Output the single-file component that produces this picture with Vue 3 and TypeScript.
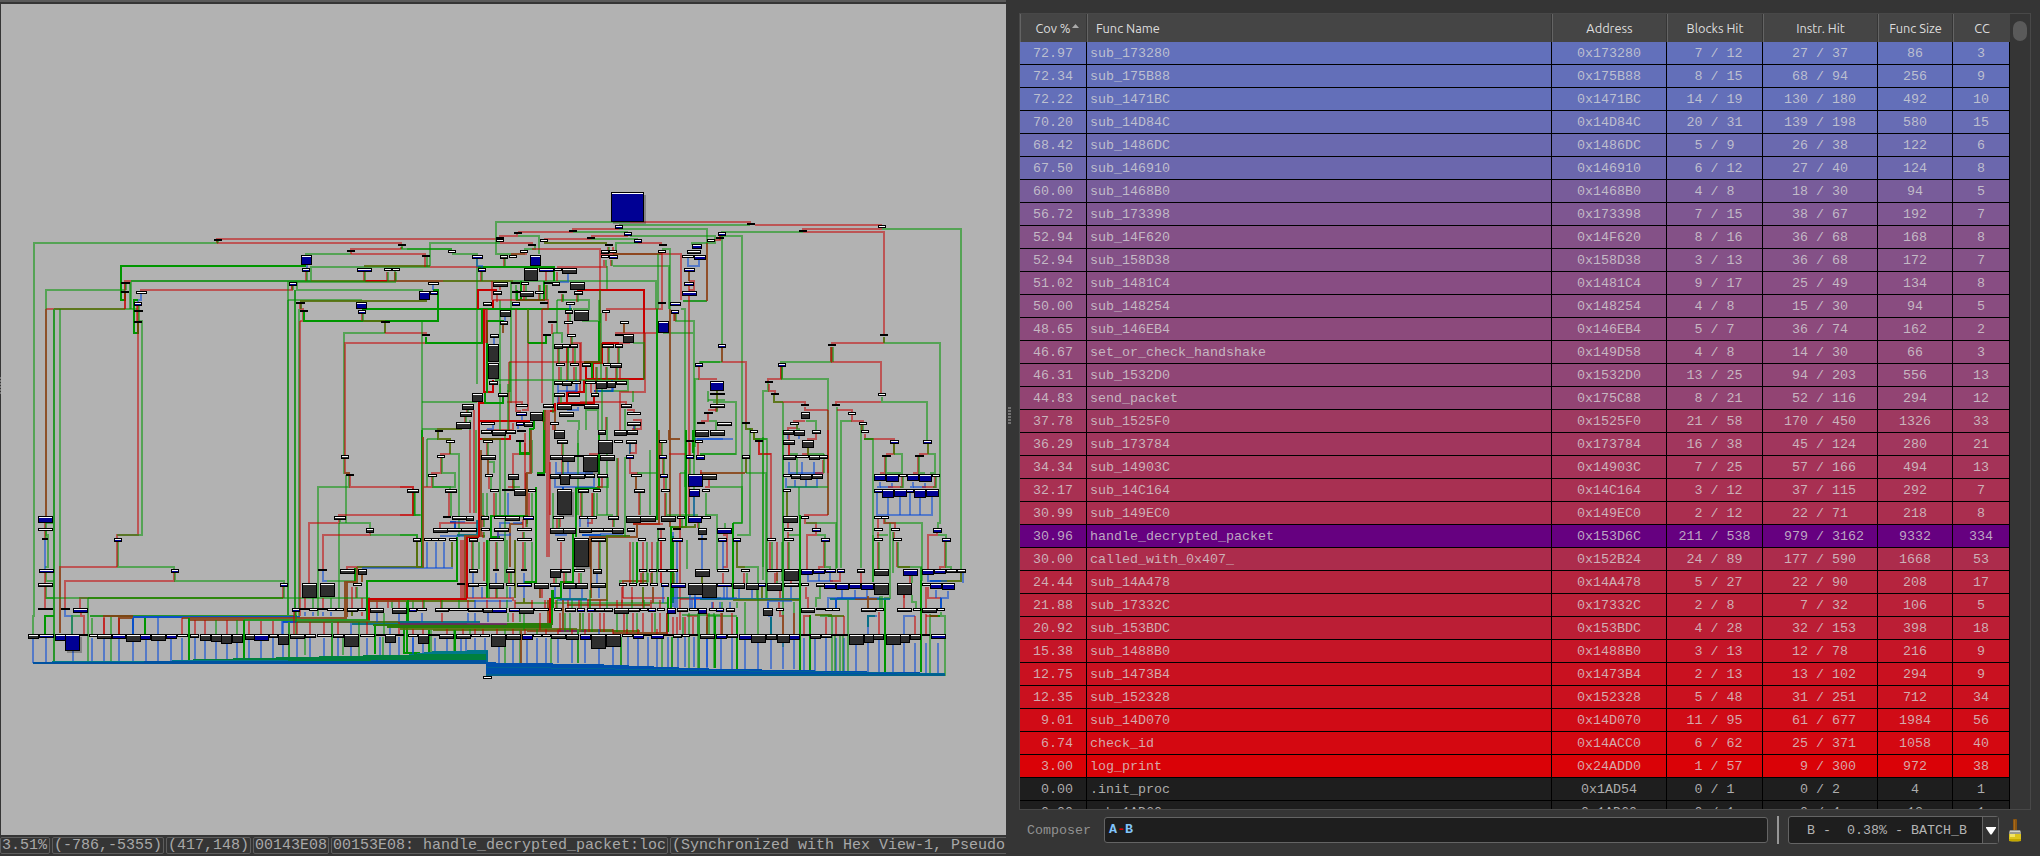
<script setup lang="ts">
type Row = [number, string, string, number, number, number, number, number, number]

const functions: Row[] = [
  [72.97, 'sub_173280', '0x173280', 7, 12, 27, 37, 86, 3],
  [72.34, 'sub_175B88', '0x175B88', 8, 15, 68, 94, 256, 9],
  [72.22, 'sub_1471BC', '0x1471BC', 14, 19, 130, 180, 492, 10],
  [70.2, 'sub_14D84C', '0x14D84C', 20, 31, 139, 198, 580, 15],
  [68.42, 'sub_1486DC', '0x1486DC', 5, 9, 26, 38, 122, 6],
  [67.5, 'sub_146910', '0x146910', 6, 12, 27, 40, 124, 8],
  [60, 'sub_1468B0', '0x1468B0', 4, 8, 18, 30, 94, 5],
  [56.72, 'sub_173398', '0x173398', 7, 15, 38, 67, 192, 7],
  [52.94, 'sub_14F620', '0x14F620', 8, 16, 36, 68, 168, 8],
  [52.94, 'sub_158D38', '0x158D38', 3, 13, 36, 68, 172, 7],
  [51.02, 'sub_1481C4', '0x1481C4', 9, 17, 25, 49, 134, 8],
  [50, 'sub_148254', '0x148254', 4, 8, 15, 30, 94, 5],
  [48.65, 'sub_146EB4', '0x146EB4', 5, 7, 36, 74, 162, 2],
  [46.67, 'set_or_check_handshake', '0x149D58', 4, 8, 14, 30, 66, 3],
  [46.31, 'sub_1532D0', '0x1532D0', 13, 25, 94, 203, 556, 13],
  [44.83, 'send_packet', '0x175C88', 8, 21, 52, 116, 294, 12],
  [37.78, 'sub_1525F0', '0x1525F0', 21, 58, 170, 450, 1326, 33],
  [36.29, 'sub_173784', '0x173784', 16, 38, 45, 124, 280, 21],
  [34.34, 'sub_14903C', '0x14903C', 7, 25, 57, 166, 494, 13],
  [32.17, 'sub_14C164', '0x14C164', 3, 12, 37, 115, 292, 7],
  [30.99, 'sub_149EC0', '0x149EC0', 2, 12, 22, 71, 218, 8],
  [30.96, 'handle_decrypted_packet', '0x153D6C', 211, 538, 979, 3162, 9332, 334],
  [30, 'called_with_0x407_', '0x152B24', 24, 89, 177, 590, 1668, 53],
  [24.44, 'sub_14A478', '0x14A478', 5, 27, 22, 90, 208, 17],
  [21.88, 'sub_17332C', '0x17332C', 2, 8, 7, 32, 106, 5],
  [20.92, 'sub_153BDC', '0x153BDC', 4, 28, 32, 153, 398, 18],
  [15.38, 'sub_1488B0', '0x1488B0', 3, 13, 12, 78, 216, 9],
  [12.75, 'sub_1473B4', '0x1473B4', 2, 13, 13, 102, 294, 9],
  [12.35, 'sub_152328', '0x152328', 5, 48, 31, 251, 712, 34],
  [9.01, 'sub_14D070', '0x14D070', 11, 95, 61, 677, 1984, 56],
  [6.74, 'check_id', '0x14ACC0', 6, 62, 25, 371, 1058, 40],
  [3, 'log_print', '0x24ADD0', 1, 57, 9, 300, 972, 38],
  [0, '.init_proc', '0x1AD54', 0, 1, 0, 2, 4, 1],
  [0, 'sub_1AD60', '0x1AD60', 0, 1, 0, 4, 12, 1],
]

const selected = 'handle_decrypted_packet'

function rowColor(r: Row): string {
  if (r[1] === selected) return '#660080'
  if (r[0] === 0) return '#1e1e1e'
  const t = (r[0] - 3) / 69.97
  const mix = (a: number, b: number) => Math.round(a + (b - a) * t)
  return `rgb(${mix(218, 98)},${mix(2, 112)},${mix(7, 187)})`
}

const ratio = (a: number, b: number, n: number) =>
  String(a).padStart(n) + ' / ' + String(b).padEnd(n)

/* Call graph. Every section has its own origin and counts in thirds of a pixel.
   blocks: "y kind+x,width,height ..." with b = covered, k = uncovered, n = collapsed
   wires:  "kind path"
   runs:   "y1 y2 kind+x ..." vertical wires, p = a true/false pair */
interface Section { x: number; y: number; blocks: string[]; wires: string[]; runs: string[] }

const sections: Section[] = [
  {
    x: 0, y: 180,
    blocks: [
      '177 n642,24', '192 n1194,24', '210 n1041,24', '225 b903,33,30',
      '264 b906,24,12 b1071,45,12 k1152,24 k1176,24', '306 n362,28 b867,24,12',
      '333 n363,24 k408,33', '366 b402,24,12 n888,27 b1068,33,21',
      '390 n402,27 n900,24 b1074,24,12', '423 n402,24 n1143,27',
    ],
    wires: [
      'g M99 1365V1308H102V189H652V180', 'r M650 180V177H1500', 'r M652 189H1203V195', 'r M1052 210V207H1203',
      'g M1206 195V207H1355', 'g M917 225V222H1052', 'r M1052 222H1278', 'G M919 257H363V360H375V336',
      'g M933 303V260H1290', 'o M1092 259H1290', 'd M392 303H933', 'o M933 303H1095', 'R M1095 303H1162',
      'n M1162 303H1330', 'o M1330 303H1540', 'g M870 306H1184V270', 'g M392 306V386', 'g M389 306V386', 'o M163 386H375',
      'g M375 386H410', 'r M138 386H163', 'n M138 386V1008', 'd M163 386V1445', 'g M180 386V1360',
      'r M352 1160H180V1360', 'r M375 386V303H392', 'g M138 386V330H375', 'r M422 335V330H876V316',
      'b M422 340V360H414V368', 'G M414 360H402V459H414V428', 'r M414 378V1065H352V1075',
      'g M417 423H426V1065H352', 'd M864 360V1308', 'g M864 303V360', 'g M891 306V330H1270', 'd M885 330V1308',
      'g M864 360H1086', 'o M900 362H1280', 'g M897 386V1308', 'r M900 423V1308', 'r M903 370V387H909V423H900',
      'G M912 395V423H1314V330H1300', 'G M1086 387H1450', 'o M1088 423H1155', 'o M1155 428V459',
      'g M1155 459H1032V825', 'r M1155 459H1278V465', 'r M1035 825V489H1445',
    ],
    runs: ['275 303 p920 p1094 p1162 p1186', '312 330 p377', '342 386 r375', '315 330 p878', '378 423 p414', '370 387 p902', '402 423 p1088', '180 189 p653', '200 207 p1205', '212 222 r1052', '255 264 b922'],
  },
  {
    x: 400, y: 180,
    blocks: [
      '36 b633,99,90', '135 b645,24,12', '150 n507,24', '156 n342,24 b672,24,12', '171 n561,24 n288,24',
      '177 k288,24 k420,24 b702,24,12 k921,24', '192 n384,24 n615,24 n777,24 b876,30,15',
      '210 k144,24 k360,24 k603,24,12 k627,24 k774,24 k861,42,12',
      '225 n66,24 b216,33,12 k300,24,12 k327,24 b390,33,33 k603,24 b627,27,12 k846,36 b882,36,15',
      '264 b234,24,12 k372,42,39 b417,45,12 k462,24 k486,45,18 b852,33,12',
      '306 k84,33 k279,45,15 n333,27 k363,24 n432,24 k456,24,12 k510,45,24 b852,30,12',
      '333 b57,33,27 b90,24,12 k279,27,12 n336,24 k360,42,18 k405,27 n474,27 k522,27,12 b846,45,15',
      '366 k249,27,12 b336,24,12 n420,24 k498,27 n774,24 b810,33,12',
      '390 k300,33,21 k495,24,12 k522,45,33 k606,24 b813,24,12',
      '423 k300,24,12 n444,27 k492,27 k660,27 b774,33,36',
      '462 n66,24 k270,27,12 n429,24 k501,27 n645,24 k669,33,27',
      '492 k264,33,54 k462,27,15 k486,24,12 k510,24,12 k606,36,12 k645,24,12',
      '549 k264,33,48 k468,27 k510,27 k546,27,12 k609,27 k630,36,15 b885,24,12',
      '603 k267,27,12 k462,27,12 k486,30,15 k516,27 k555,33 k588,33,24 k621,27,21 k648,33,12 b930,42,30',
      '639 k216,33,27 k294,30,12 k462,33,12 k504,36,12 k573,24,12 n930,45',
      '672 k186,36,18 k348,36 k429,33,12 k471,45,18 n516,36 k552,45,15 k663,33,12 k930,45,12',
      '696 k180,36,15 b348,33,12 k390,39,27 k477,45,15 k681,42 n912,27',
      '726 k168,45,21 k243,42 b348,24,12 k372,27,15 k450,27 k681,42,12 n891,24 k951,45,12',
      '750 n105,24 k243,33,12 k276,42,18 k318,30,12 n351,27 k462,33,27 k594,24,15 k642,39,18 k681,33,15 k885,42,21 k930,45,18',
    ],
    wires: [
      'r M690 126H1050V131', 'g M690 126H288V222H372V212', 'g M656 134H1050', 'r M656 147H518V150', 'g M656 147H921V362',
      'r M518 156H354', 'g M520 156H684', 'r M350 160V168H300V172', 'g M354 168H417V222', 'r M684 168H572',
      'g M690 168H945V189H876V195', 'g M572 177H714', 'r M572 177H432', 'o M432 189H620', 'r M714 189H787', 'g M648 222V189H714',
      'r M300 189H396V195', 'g M90 258V189H300', 'g M155 207H20', 'g M155 222H231V612', 'g M372 207H405V195',
      'r M396 207H600V550', 'r M336 225V222H380', 'r M600 222H843V360', 'n M640 222H787', 'g M787 207H809V387',
      'G M234 261H462V303', 'r M90 261H234', 'r M470 261H620', 'g M640 258H807V387', 'g M620 258V330', 'b M231 235V258H245V265',
      'g M340 303H768V387', 'R M292 330H234V387', 'R M530 330H732V460', 'n M732 460V597', 'R M732 597H560',
      'R M552 600V636H500V670', 'R M583 640V669H470', 'R M465 670V693H435', 'R M606 490V549H579V600', 'R M558 555V600',
      'R M255 387H279V360', 'R M252 490V636H279V600', 'R M238 1065V670H255V640', 'R M390 723H238V777H330V765',
      'R M606 489H656', 'G M246 387V489H78V470', 'G M250 387H515', 'G M262 640V423H312', 'G M308 645V669H256V640',
      'G M348 360H432V303', 'G M362 303V360', 'o M384 387V489', 'G M384 489H438V465', 'G M598 423V546H552',
      'G M576 549V595', 'g M546 423H598V360', 'g M300 360V640', 'g M333 303V669', 'r M276 303V360', 'r M348 387V693H360V698',
      'r M384 489V690H365', 'r M427 387V670', 'r M279 360H445V387H427', 'r M327 546V750', 'r M327 546H600', 'g M285 600H685V633H600',
      'g M600 330V430', 'g M472 360V460', 'g M472 360H567V387H520', 'g M460 459V700', 'g M460 459H486V489', 'r M540 489V640',
      'r M512 489H542V600', 'r M620 390V387H785V370', 'd M850 362H921', 'r M922 190V362', 'g M843 387H855V1000',
      'g M825 423H882V1010', 'g M790 459H880', 'r M867 345V1010', 'r M736 459V636H660V750', 'r M645 459H774',
      'g M700 489H732V600', 'g M65 423V750', 'g M65 666H230', 'g M897 546H960', 'r M897 560V597H950', 'g M885 800V597H897',
      'b M863 235V258H896V240', 'r M867 303H882V330H867', 'b M505 275V305H482V310', 'b M475 632H530V612', 'b M583 632H640V620',
      'B M583 633H605', 't M605 633H640', 'b M500 690H534V680', 'r M320 666H366V672', 'g M320 633H330V546', 'g M66 747H110', 'o M110 747H187',
      'r M540 666H678V675', 'r M680 690H703V696', 'r M700 720H722V747H695', 'g M678 690H676V750', 'g M560 690H595V750',
      'g M500 723H537V750', 'n M465 693V750', 'G M402 747V720', 'G M402 747H390V820H360V780', 'g M925 660H975', 'g M925 633V666',
      'r M903 723H925V700', 'g M928 723H948V750', 'r M925 690H950V684', 'b M890 776H1000', 'r M258 750H340V730', 'b M262 747H278V735',
      'G M350 360V330', 'r M655 492V489H690', 'g M700 633V666', 'r M215 663H240', 'r M222 690V750', 'g M210 720V750', 'g M490 360V345',
    ],
    runs: [
      '237 258 p313', '230 260 p78', '275 303 r438 r470 p245', '315 330 r300 b100', '315 360 g348 p375 p418 p440', '342 366 r292 p487 p532',
      '375 390 b510', '402 423 p507 p825', '432 462 r505 r457', '470 492 p514', '505 549 p475 p502 p522', '505 600 p502',
      '505 549 p625 p656', '560 600 p480 p525 p620 p650 r660', '240 258 p635 p615', '200 222 p625 r638', '220 366 r785',
      '275 303 n867', '315 333 r867', '402 423 n825', '400 423 r617', '432 460 n672', '412 425 b315', '435 460 n310', '472 492 b282',
      '600 636 b528 b635 b500', '645 670 b475 p480', '700 720 b365', '735 747 b355', '690 700 p203', '710 726 p197', '387 1020 G772',
      '222 387 g774', '387 1040 n811', '387 490 R252 r258 r262', '400 600 g603', '560 640 p590', '612 640 b475 r573', '620 750 g605',
      '690 1130 x443', '690 880 G433 n436', '612 750 g300 g325', '735 750 r460 p703', '735 746 b703', '710 726 p430', '600 750 g558', '710 750 p620', '780 880 p393',
    ],
  },
  {
    x: 700, y: 180,
    blocks: [
      '129 n141,24', '135 k534,24', '150 n297,24', '156 b54,24,12', '171 n48,24', '462 n540,24', '492 b54,24,12 n384,24',
      '549 b234,24,12', '603 n195,24', '639 n213,24 k534,24', '672 n303,24 n396,24', '696 k303,27,21 k444,24',
      '726 n126,24 k270,27 k477,24', '750 k150,24 k249,33,15 k282,33,18 k336,27,12 k483,24',
    ],
    wires: [
      'r M165 135H546', 'g M546 147H783V1170', 'r M546 147H308V150', 'r M308 156H552V465', 'g M308 156H66V492',
      'r M60 168V180H30', 'g M60 168H126V1028H98', 'r M396 492V489H552', 'g M552 489H720V1028H714V1045', 'g M394 500V546H243V549', 'r M396 500V546H543V640',
      'r M66 546H138V727', 'n M66 503V546', 'g M0 546H66', 'r M243 560V597H204V604', 'g M246 560V597H384V690', 'n M384 690V1005',
      'g M205 610V633H189V1200', 'r M206 612V633H225V640', 'g M249 666V1400', 'o M223 645V666H249', 'r M249 666H315V674', 'r M314 680V690H384',
      'r M384 1005H315V1010', 'g M546 650V666H681V780', 'r M543 666H408V674', 'g M411 680V1165', 'r M410 690H456V697',
      'g M456 723H423V1165', 'r M456 705V723H489V728', 'r M495 762V777H582V782', 'o M493 777H520', 'r M315 723H283V727',
      'g M317 723H348V750', 'g M40 666H108V822H0', 'r M263 750V745H290V735', 'g M290 735V747H300', 'o M138 733V747H160', 'o M162 760V777H180', 'g M180 777H202', 'g M483 1165V735',
      'g M150 745V1065H111', 'r M348 760V777H323V790',
    ],
    runs: ['470 489 o552', '168 180 r60', '500 546 p396', '560 597 p244', '735 750 p488', '765 777 b265 b297', '633 672 o50', '684 697 p50'],
  },
  {
    x: 0, y: 430,
    blocks: [
      '75 k1023,24,12', '132 n1038,24', '177 k1221,36,12', '258 b114,45,21 k1002,36,12', '294 k114,45 k1098,24,15',
      '324 n126,18 b342,24,12 k1239,24,12', '417 b117,45,12 b513,24,12 n954,27 k1020,45,15 k1074,27,18',
      '459 k114,45,12 b840,24,12 k906,45,45 k960,45,42 k1059,27',
      '534 n114,45 n183,27 b219,45,15 b876,24,12 n897,30 k927,27 n951,30 k981,27 k1008,24 k1041,33,12 k1074,24 k1110,42,15 k1176,45,18 b1227,24,12',
      '612 k84,33,15 b117,45,12 b165,33,21 b195,45,51 n237,27 k267,27 k291,45,15 b336,42,15 k378,45,24 b420,33,18 k453,45,21 b498,33,15 k531,33 k570,27,12 k600,33,21 k633,33,24 k663,33,30 k696,33,27 k735,30,18 b762,45,21 k807,27,12 k834,33,33 k870,45,15 k915,33,12 k951,45 k999,33,12 k1032,45,39 k1080,45 n1128,27 k1155,33,27 n1185,27 k1224,30',
    ],
    wires: [
      'g M1033 85V128H1050', 'r M1036 85V128H1050', 'g M1038 135V279', 'g M1047 138V171H954V558', 'r M1050 138V171H1239V180',
      'r M1239 188V255H1017V260', 'g M1242 188V255H1260', 'r M1017 268V279H927V460', 'g M1020 268V279H1110V295', 'g M1017 279V535',
      'r M1110 308V315H969V417', 'g M1110 315H1251V325', 'b M969 422V453H981', 'g M981 453H1065', 'G M1065 414V453', 'o M1251 335V410',
      'o M1070 410H1270', 'b M1085 414H1358', 'r M1040 420V410H1070', 'n M1070 410V455H1035V562', 'n M1040 455V560',
      'o M264 504H850', 'r M240 535V504H264', 'g M138 504H1110', 'g M355 335V410H521V418', 'r M352 335V410',
      'r M522 428V453H195V535', 'g M525 428V453H852V460', 'g M264 504V695', 'g M138 279H158', 'g M138 300V315H144V410H135', 'g M138 428V453H160',
      'g M138 470V504H160', 'G M136 612V558H162', 'b M195 540V558H216V612', 'r M243 548V558H252V612', 'g M216 612V558H240',
      'd M270 558H890', 'r M312 612V558H400', 'B M400 562H900', 'n M357 612V563H400', 'n M546 565H1040', 'n M568 569H1100', 'd M732 571H1110',
      'B M848 575H1260', 'R M1107 570V507H1200', 'n M1110 512H1200', 'G M1100 570V453H1372V320', 'o M891 577H1222', 't M1055 581H1400',
      'G M1222 588H1260', 'G M1222 575V512', 'r M849 470V504', 'g M852 470V504', 'G M1125 588V672', 'G M1213 588V668H1260', 'G M1220 588V668', 'b M1170 612V584H1400',
      'b M846 612V573', 'b M850 612V573', 'b M1053 612V580',
    ],
    runs: [
      '280 325 r135 g138', '330 417 b135', '428 460 r135', '470 535 r135', '435 455 n1086', '470 504 p1070', '470 535 r1056', '504 535 r1085', '504 535 r915 g938 r969 g993',
      '510 535 r1131 r1164 r1197 g1176 g1239', '545 612 p885', '545 558 b915 b940 b969 b993 o1056 r1086',
      '565 612 g276 g435 G435 b399 B399 b474 r312 r357 r546', '570 612 r585 r615 g648 r681 g711',
      '573 612 r747 r783 r819', '577 612 r891 r930 r972 r1014 r1101 g1152 r1197', '560 695 g333 d162',
      '565 690 G567', '571 688 G732', '577 685 d868 d996 g1077',
      '625 698 b99 b138 b219 b276 b312 b357 b399 b438 b474 b513 b546 b585 b615', '625 688 b648 b681 b711 b747 b783 b819 b850 b891 b930 b972 b1014 b1053 b1101',
      '622 675 b1140 b1170 b1197 b1239 g915 g1030 g1148', '550 575 b1131 b1197 g1152',
    ],
  },
  {
    x: 400, y: 430,
    blocks: [
      '30 k138,27 k249,30 n348,24 k471,33,12 k594,45,42 k642,27 k678,33,12 k777,24 n858,24 k885,24',
      '75 k111,24 k243,45,15 k450,39,15 k486,39,21 n525,24 k549,45,51 k600,45,18 b678,24,12 b777,24,12 b858,24,12 b888,27,15',
      '132 k84,27 k255,24 k324,33,18 n411,24 k450,30,15 k510,45,15 k480,30,33 k555,30,12 k591,33,12 k693,33 b780,24,12 b864,45,39 k906,45,18',
      '177 k21,36,12 k135,36,12 k270,27 n306,36 k342,36,21 k384,24 k471,45,78 k534,33,12 k579,24 k702,33,12 k783,27 b867,33,24 k906,24',
      '258 n129,24 k156,45,12 k198,24,15 k243,24,12 k282,36 k315,45,15 b369,33,12 k459,33 k537,30 k561,30 k624,33,12 k678,45,21 k720,48,18 k783,45,18 k831,24 b864,42,21 k906,27',
      '294 k99,45,15 k141,45,12 k183,48,12 k243,27 k282,45,12 k351,45 k450,42,18 k489,39,18 k537,39,15 k573,42,12 k609,33,12 k636,36,18 k681,24,12 n771,24 n819,24 k894,27,21',
      '324 k39,24,12 k72,24 k93,24 k114,24 k147,24 k207,27,12 k267,45 k351,45 k471,24 k522,45,87 k573,45,12 k714,24 k774,24 b816,33,12 n894,27',
      '417 k207,27,12 n279,18 k318,27,12 n363,18 k450,33,27 k483,30,12 k522,33 k579,27,15 k717,24 k747,24 k774,27 k801,33 k885,45,24',
      '459 n171,24 k204,33,12 k234,27 k267,45,18 k318,27 b351,45,12 k402,45,18 k450,30,12 k489,39,18 k528,36,18 k573,45,15 k657,24 k687,24 k717,27 k750,24 b783,24,12 b813,45,15 k864,45,36 k906,45,45',
      '534 k51,30 k105,42,12 k147,57 k204,45,12 k249,30,15 b276,45,15 b327,33,12 k357,45,18 k402,45 k462,24 k495,33,12 b531,24,12 b561,24,12 k585,30,12 k612,27,12 k642,45,18 k684,36,12 k720,24 b744,24,12 k771,24 b801,27,18 k831,33,12 k867,27 b894,27,18',
      '612 n0,12 k24,30 k54,33,30 n87,30 k117,45,15 k168,45,15 k213,30 k240,30 k273,45,39 k318,45,18 b366,33,18 k399,27 k426,27 k453,45,15 k498,39,18 b540,33,18 k573,45,45 k618,45,39 k666,33 b699,33,15 n732,24 b753,39,15 n792,27 k819,27,12 k846,24 n870,24',
      '738 k249,27',
    ],
    wires: [
      'o M115 5V27H150V32', 'g M81 27H115', 'g M81 27V170', 'o M150 40V72', 'r M150 72H123V77', 'g M150 72H177V320', 'r M123 85V129H97V133',
      'g M126 85V129H165V171H100', 'r M95 141V171H70', 'g M100 141V171H150V178', 'r M0 171H38V178', 'r M38 188V255H0', 'g M41 188V255H66',
      'g M0 315H50V325', 'o M50 335V410H72', 'o M157 335V410', 'b M131 335V414', 'b M108 335V414', 'b M81 335V414', 'b M160 276H195', 'B M150 276H165V294', 'r M120 294V279H240',
      'b M120 318H192', 't M170 315H230V270', 'R M200 505V320H238', 'n M196 505V318H255', 'g M245 27H300V258', 'g M265 95H282V130', 'r M340 132V72H376',
      'g M340 150V171H360', 'b M324 190V258', 'r M324 171H345', 'n M392 0V128H380V282', 'n M377 128V255', 'n M365 275V282H330V410', 'G M433 0V128H410', 'G M408 170V455H372',
      'G M598 0V175H528V320', 'G M520 312V455H482V505H455', 'G M455 505V585', 'G M360 40V72H390', 'b M468 95V129H575V135', 'b M505 95V129', 'r M570 75V72H594',
      'b M465 145V171H530', 'B M490 178V171', 'b M583 145V171H530', 'g M625 140V171H592', 'r M592 171H607V145', 'o M690 40V72', 'b M690 40V72', 'r M690 40H708V70H690',
      'r M690 85V129H710V135', 'g M710 129H772', 'n M708 140V178', 'g M720 188V255', 'r M716 188V255', 'r M575 190V279H560', 'g M590 190V255H640',
      'G M772 0V255', 'n M776 0V282H700', 'n M808 0V27H840', 'g M798 190V255H895', 'r M795 188V258', 'r M807 72H860', 'r M840 130V600', 'g M840 129H860',
      'G M857 0V290H812V530', 'o M885 282V290H820', 'g M883 0V80', 'G M880 0V70', 'g M900 72H1007', 'n M900 129H1036', 'b M885 27H970', 'b M882 200V258', 'g M918 190V255',
      'r M700 282H790', 'R M238 0V320', 'n M242 60V315', 'G M272 255V320H300', 'b M300 294V279H330', 'b M340 279H365', 'G M275 258H385',
      'b M465 315H500', 'B M545 316H600V312', 'b M600 312H670', 't M600 318H690', 'n M710 282V320H570V410', 'o M690 318H622V512', 'n M572 320V505',
      'r M480 268V290', 'b M290 315H330V310', 'r M370 294V268',
      'R M-90 507H200', 'n M-90 512H0', 'r M200 505H340V512', 'o M0 512H225', 'b M225 512H335', 'o M345 518H400', 'g M400 520H800', 'n M500 526H750', 'b M470 511H560', 'n M560 511H620', 't M480 508H560',
      'G M24 578V510', 'e M-80 586H455', 'e M-40 591H455', 'o M0 597H530', 't M0 575H240', 'u M0 581H450', 'R M450 580V505', 'n M444 510V580', 'o M100 599H640',
      'n M380 602H660', 'u M475 604H640', 'n M640 608H800V550', 'o M560 603H720', 'e M320 583H460', 'n M490 510V600',
      'G M820 318V520', 'b M820 530V505H870', 'g M830 505H960V500', 'g M660 459V453H745V430', 'r M668 505V453H740', 'r M668 505H795', 'r M860 558H900', 'g M845 555H960',
      'r M840 508H960', 'b M875 534V505H905', 'B M885 534V505H930', 'G M805 500V535',
    ],
    runs: [
      '0 410 G66', '20 410 n70', '0 250 r210 r222 g228', '40 75 p263', '90 132 n265', '142 178 p270', '188 258 p285 g250 g262', '10 75 r375', '40 180 r375', '150 180 p340',
      '188 258 g395 r388', '188 258 p42 p150', '40 75 p487 g535', '90 132 p487', '188 258 p545 p580', '255 290 p250 p380', '268 295 p474', '268 290 b540 b565 p640',
      '305 325 p250 p370 r295 b295', '335 417 p290 g237 g262 p372 p218', '335 417 r482 p599', '335 460 r690 g700 G712 r728 g740 r757 g770 b832 r782',
      '330 505 G262 g268 o345 r182 r188 g322', '335 453 r252 g395 G408', '428 460 b218 b288 p330 b372 p465 p495 p540 b592', '0 255 g535 g620', '80 320 g675',
      '430 460 r722 g730 r752 g757 r783 p820 o905', '470 505 b220 b245 p290 b330 b372 r425 n420 b465 b510 b545 b597', '505 520 o372', '470 520 r665 r695 o730 n760 b790',
      '470 535 b825 b832 b870 b885 G812', '480 534 G455 G460 g570', '510 535 p70 p125 g177 r205 b225 r260 r300 g322 r345 r395 r435 p470 r505 g515 p540 p567 r600 g622 r650 r665 g695 p730 r753 r780',
      '550 575 b65 r125 b205 b225 b265 g325 r340 g360', '550 600 g372 r420', '550 605 r480 g495 g510 o540 g550 r567 g575 r600 r612 g650 r672 g680 r700 g710 r730 r757 g765 r780 G805',
      '597 612 r40 r70 r140 r190 g210 r225 r250 g315 r290 r340 r375 g410 r438 r475 r515 r555 b597 r640 r680 r715 r770',
      '560 612 r820 r830 g850 r855 r880 g895 d920 d945', '600 672 g92 G88 g162 G165', '550 715 g867 g893 d897 g943', '600 700 g360 n363 d535',
      '625 670 b38 b70 b105 b140 b183 b198 b225 b255', '625 700 b297 b338 b380 b410 b438 b475 b515 b555 g315 g453', '640 708 b597 b640', '622 712 b683 b715 b743 b770 b805 b835 b855 b882 b920 d662 g785 d815',
      '95 255 r450', '188 294 g460', '268 294 r840 g845 p895', '300 417 g775 r782', '305 325 b905 b820', '330 417 b907 g860', '120 170 g855 r903', '40 75 p785 r870 r893', '85 132 p790 g870', '142 178 p795',
      '85 258 r655 g650', '60 255 g750', '0 460 g315', '550 612 r800',
    ],
  },
  {
    x: 700, y: 430,
    blocks: [
      '30 n165,24 k249,36,15 k306,36,24 b570,27,12 b669,27,12', '75 k126,24,12 k249,39,15 k288,39 k327,33,15 k357,27,12 n546,27 n645,27',
      '132 k249,24 k273,30,15 k300,36,18 k336,33,15 b522,36,21 b558,39,24 k597,24 b621,36,21 b657,39,24 k696,24',
      '177 k249,24 b522,27,12 b546,36,27 b582,39,24 b618,24,12 b642,36,27 b678,39,24', '258 k249,45,21 k303,24 k522,24 k543,24',
      '294 b51,45,18 k252,27 b336,27,12 k522,27 k573,27 b699,27,15', '324 b54,27,12 b99,24,12 k201,27 k252,30 b363,27,12 k522,27 k579,27 b726,27,12',
      '417 k51,36 k123,27 k201,45 k252,45,36 b303,36,18 b339,36,15 b375,33,12 b411,24,12 k471,24,12 k522,45,21 b609,45,21 b666,36,18 b702,36,15 k738,33,12 k771,27,12',
      '459 b51,45,12 k99,36,18 k138,39,21 b174,24,12 k201,45,24 k252,45,12 k303,24 k348,27,12 b372,36,18 b408,39,21 b447,36,18 b483,39,21 k522,45,36 k591,45,36 k666,27 b690,36,18 b726,39,21',
      '534 k27,24 b48,24,12 k78,27,12 k189,30,24 k228,24 k303,42,15 n348,27 k375,24 k396,24 k483,45,12 k528,24 k591,45,12 k639,24 k666,45,15 k711,24',
      '612 k0,45,15 b48,33,15 k81,33,12 b117,39,18 k153,45,27 k198,33,18 k231,39,27 b267,33,18 n303,27 k330,33,15 k363,33,12 n396,48 k447,45,33 k492,30,27 k519,33,18 k558,45,33 k600,30,27 k630,33,18 n666,24 b693,45,15',
    ],
    wires: [
      'g M162 27H202V505', 'r M176 35V72H213V325', 'r M178 35V72H213', 'o M138 85V129', 'g M138 129H198V505', 'r M28 148V171H15', 'g M30 171H126V279', 'g M15 255H51V420',
      'g M493 27H519V455', 'r M323 72V55', 'r M323 72H305', 'g M325 72H370V80', 'b M268 95V129H370', 'g M270 72H290V132', 'r M370 90V129H345', 'g M372 72V129', 'b M258 143V171H352V148',
      'b M285 150V171', 'b M318 150V171', 'g M260 171H384', 'o M262 187V258', 'g M297 171V258', 'r M315 268V279H348V295', 'g M318 279H408V417', 'r M348 305V315H321V417', 'g M350 315H375V325',
      'r M372 335V410H357V417', 'g M376 335V410H390V417', 'g M265 315H300V510', 'd M250 0V505', 'G M300 255V510', 'g M99 279H126', 'G M98 279V505', 'o M111 335V410H136', 'g M136 410H174V460',
      'r M72 313V315H81V410H68', 'g M75 279V294', 'b M68 335V417', 'r M582 42V72H557', 'g M582 72H606V129H575', 'o M582 42V72', 'r M683 72H657', 'g M683 72H705V129H690', 'o M683 42V72',
      'r M555 82V129H540', 'g M558 82V129H575', 'r M655 82V129H640', 'g M658 82V129H675', 'b M540 155V171H530', 'b M576 158V171H540', 'r M605 142V171H565', 'g M608 142V171H600',
      'b M640 155V171H630', 'b M675 158V171H640', 'r M704 142V171H665', 'g M707 142V171H700', 'b M531 190V255H696V202', 'b M564 205V255', 'b M600 202V255', 'b M630 190V255', 'b M660 205V255',
      'g M555 268V279H666V453', 'r M535 268V294', 'r M552 268V279H585V294', 'r M711 308V315H684V418', 'g M713 315H738V325', 'r M735 335V410H720V417', 'g M738 335V410H753V417',
      'r M590 335V410', 'g M594 335V410H662V453', 'r M582 305V325', 'g M579 305V430', 'o M594 410H630', 'g M570 279V505H555V725', 'g M520 315V455', 'g M565 315H530',
      'b M324 435V453H400', 'b M357 432V453', 'b M390 430V453', 'r M420 430V453H390', 'o M783 430V453H720', 'b M684 435V453H740', 'B M690 453H722', 'g M664 410V725', 'G M664 450V725', 'g M690 552V735', 'G M690 558H720',
      't M0 507H300', 'b M0 505H110', 'o M100 510H300', 'b M200 512H275', 'G M300 450V720', 'b M385 534V505H540', 't M390 507H570', 'n M465 508H530', 'b M425 480V505', 'b M465 480V505', 'b M502 480V505H410', 'B M408 534V505',
      'r M318 470V505H324V535', 'g M360 470V505H348V530', 'o M345 555H395', 'g M395 558V725', 'o M385 558H432', 'r M432 558V612', 'g M445 510V725', 'G M329 555V720',
      'b M213 612V558H203', 't M213 612V560', 'r M240 542V558H249V612', 'b M203 535V515', 'g M283 515V612', 'b M505 612V558H530', 't M505 590V558H525', 'b M613 612V558H645', 'r M645 558V612', 'r M536 545V612',
      'r M678 612V552', 'r M678 558H715', 'g M722 545V558H736V735H690', 'r M685 470V505H722', 'b M744 482V505H722V535', 'B M722 505V535', 'b M708 480V505', 'r M678 470V535', 'r M612 495V535', 'g M635 495V515H648V535', 'G M555 510V725', 'G M44 558V715', 'G M112 560V718', 'g M20 558H112', 'g M135 515V612', 'g M174 480V612',
      'r M312 612V558H330', 'r M378 560V612', 'r M408 560V612', 'g M360 558H395',
    ],
    runs: [
      '0 130 r384', '0 75 r268', '45 75 r267 o323', '95 132 b305 b342', '10 30 o162', '280 294 r263', '305 325 r263', '335 417 r263 g268 p535 p213', '305 325 r533', '428 460 r68 r132 g140 r225 g230 r272 r483 r630 g635 b790',
      '471 505 b72 b80 b117 b155 o185 b272 g170', '335 453 r230 g246', '515 535 r40 b37 b60 g65 b90 r237 b205 g110', '550 612 r20 g28 r62 n65 r95 r283', '497 535 n505 g540 g545',
      '625 718 b20 b62 b95 b135 b174 b213 b249 b283', '625 725 b312 b345 b378 b408 b432 b468 b505 b536', '640 733 b579 b613 b645 b678 b714', '615 725 g405 g419 g430', '20 410 g188', '470 505 r612 r240',
    ],
  },
]

interface Wire { kind: string; d: string }
interface Block { kind: string; x: number; y: number; w: number; h: number }

function wiresOf(s: Section): Wire[] {
  const out = s.wires.map(w => ({ kind: w[0], d: w.slice(2) }))
  for (const line of s.runs) {
    const [y1, y2, ...items] = line.split(' ')
    for (const it of items) {
      const x = Number(it.slice(1))
      if (it[0] === 'p') {
        out.push({ kind: 'r', d: `M${x - 2} ${y1}V${y2}` }, { kind: 'g', d: `M${x + 2} ${y1}V${y2}` })
      } else out.push({ kind: it[0], d: `M${x} ${y1}V${y2}` })
    }
  }
  return out
}

function blocksOf(s: Section): Block[] {
  return s.blocks.flatMap(line => {
    const [y, ...items] = line.split(' ')
    return items.map(it => {
      const [x, w, h] = it.slice(1).split(',').map(Number)
      return { kind: it[0], x, y: Number(y), w, h: it[0] === 'n' ? 6 : (h || 9) }
    })
  })
}

const graph = sections.map(s => ({
  at: `translate(${s.x} ${s.y}) scale(0.333333)`,
  wires: wiresOf(s),
  blocks: blocksOf(s),
}))

const status = ['3.51%', '(-786,-5355)', '(417,148)', '00143E08', '00153E08: handle_decrypted_packet:loc', '(Synchronized with Hex View-1, Pseudo']
const headers = ['Cov %', 'Func Name', 'Address', 'Blocks Hit', 'Instr. Hit', 'Func Size', 'CC']
const batch = 'B -  0.38% - BATCH_B'
</script>

<template>
  <div class="app">
    <section class="graph-pane">
      <div class="canvas">
        <svg class="graph" viewBox="1 4 1005 831" shape-rendering="crispEdges">
          <g v-for="(s, i) in graph" :key="'w' + i" :transform="s.at">
            <path v-for="(w, j) in s.wires" :key="j" :d="w.d" :class="['wire', 'wire-' + w.kind]" />
          </g>
          <g transform="translate(0 430) scale(0.333333)">
            <polygon points="99,695 700,690 1200,677 1300,664 1463,660 1463,702 99,702" fill="#00788a" />
            <polygon points="480,691 720,685 1200,674 1463,671 1463,690 1200,692" fill="#00803e" />
            <polygon points="99,696 1463,690 1463,702 99,702" fill="#0052a0" />
            <rect x="1458" y="662" width="6" height="76" fill="#006a90" />
            <polygon points="1458,697 1800,703 2100,715 2835,729 2835,738 1458,738" fill="#0050ac" />
            <polygon points="1458,732 2835,732 2835,738 1458,738" fill="#00608c" />
            <polyline points="1458,711 2100,721 2835,731" fill="none" stroke="#006496" stroke-width="3" />
          </g>
          <g v-for="(s, i) in graph" :key="'b' + i" :transform="s.at">
            <g v-for="(b, j) in s.blocks" :key="j">
              <rect v-if="b.w > 40 && b.h > 45" :x="b.x + 6" :y="b.y + 9" :width="b.w" :height="b.h - 3" fill="#000" opacity=".25" />
              <rect :x="b.x" :y="b.y" :width="b.w" :height="b.h" fill="#000" />
              <template v-if="b.kind !== 'n'">
                <rect v-if="b.h > 9" :x="b.x + 3" :y="b.y + 6" :width="b.w - 6" :height="b.h - 9" :class="'fill-' + b.kind" />
                <rect :x="b.x + 3" :y="b.y + 3" :width="b.w - 6" height="3" fill="#fff" />
              </template>
            </g>
          </g>
        </svg>
        <span class="grip grip-left"><i v-for="n in 6" :key="n" /></span>
      </div>
      <div class="status">
        <span v-for="(s, i) in status" :key="i" :class="['cell', 'cell-' + i]">{{ s }}</span>
      </div>
    </section>

    <div class="splitter"><span class="grip"><i v-for="n in 6" :key="n" /></span></div>

    <section class="coverage">
      <div class="table">
        <div class="grid">
          <div class="row head">
            <span v-for="(h, i) in headers" :key="h" :class="{ name: i === 1, first: i === 0 }">{{ h }}<svg v-if="i === 0" class="sort" width="7" height="5" viewBox="0 0 7 5"><path d="M3.5 0L7 4H0z" fill="#aaa" /></svg></span>
          </div>
          <div v-for="f in functions" :key="f[1]" class="row" :style="{ backgroundColor: rowColor(f) }">
            <span>{{ f[0].toFixed(2).padStart(5) }}</span>
            <span class="name">{{ f[1] }}</span>
            <span>{{ f[2] }}</span>
            <span>{{ ratio(f[3], f[4], 3) }}</span>
            <span>{{ ratio(f[5], f[6], 4) }}</span>
            <span>{{ f[7] }}</span>
            <span>{{ f[8] }}</span>
          </div>
        </div>
        <div class="scroll"><div class="thumb" /></div>
      </div>
      <div class="composer">
        <label>Composer</label>
        <div class="input"><b>A</b><em>-</em><b>B</b></div>
        <div class="rule" />
        <div class="combo">
          <span class="value">{{ batch }}</span>
          <span class="drop"><svg width="10" height="8" viewBox="0 0 10 8"><path d="M0 0H10V1L5.6 7.5H4.4L0 1z" fill="#fff" /></svg></span>
        </div>
        <svg class="brush" width="12" height="23" viewBox="0 0 12 23">
          <rect x="4" y="0" width="4" height="12" rx="1" fill="#8a5410" />
          <rect x="5" y="1" width="1" height="10" fill="#a86a1c" />
          <path d="M1 11H11L12 13V15H0V13z" fill="#9a9a90" />
          <rect x="1" y="12" width="10" height="1" fill="#d4d4cc" />
          <path d="M0 15H12V22Q6 23 0 22z" fill="#dcc41c" />
          <rect x="1" y="15" width="5" height="3" fill="#f2e468" />
          <rect x="0" y="20" width="12" height="2" fill="#c4a800" />
        </svg>
      </div>
    </section>
  </div>
</template>

<style>
html, body { margin: 0; background: #353535; overflow: hidden; }
</style>

<style scoped>
.app {
  display: flex;
  width: 2040px;
  height: 856px;
  background: #353535;
  color: #b4b4b4;
  font: 13.333px "Liberation Mono", monospace;
  overflow: hidden;
}
.graph-pane { width: 1006px; display: flex; flex-direction: column; overflow: hidden; border-top: 2px solid #5a5a5a; box-sizing: border-box; }
.canvas { position: relative; margin: 2px 0 0 1px; height: 831px; background: #b2b2b2; }
.graph { display: block; width: 1005px; height: 831px; }
.wire { fill: none; stroke-width: 6; }
.wire-g { stroke: #009600; opacity: .52; }
.wire-r { stroke: #c80000; opacity: .52; }
.wire-b { stroke: #0046dc; opacity: .52; }
.wire-G { stroke: #009600; }
.wire-R { stroke: #c80000; }
.wire-B { stroke: #0a50c8; }
.wire-d { stroke: #28962a; }
.wire-e { stroke: #287c08; }
.wire-o { stroke: #54700c; opacity: .9; }
.wire-n { stroke: #88461a; opacity: .9; }
.wire-t { stroke: #006e82; opacity: .9; }
.wire-u { stroke: #6a2860; opacity: .9; }
.wire-x { stroke: #bb5a5a; stroke-width: 12; }
.fill-b { fill: #000094; }
.fill-k { fill: #2e2e2e; }
.status { display: flex; gap: 2px; margin-top: 2px; height: 17px; font-size: 15px; line-height: 16px; color: #a8a8a8; }
.cell { box-sizing: border-box; flex: none; border: 1px solid #5e5e5e; border-radius: 2px; padding-left: 1px; overflow: hidden; white-space: pre; }
.cell-0 { width: 50px; }
.cell-1 { width: 112px; }
.cell-2 { width: 85px; }
.cell-3 { width: 76px; }
.cell-4 { width: 337px; }
.cell-5 { width: 345px; }
.splitter { width: 13px; display: flex; align-items: center; padding: 0 0 25px 2px; box-sizing: border-box; }
.grip { display: flex; flex-direction: column; gap: 1px; }
.grip i { width: 3px; height: 2px; background: #727272; }
.grip-left { position: absolute; left: -1px; top: 373px; }
.grip-left i { width: 1px; background: #777; }
.coverage { width: 1021px; padding-top: 13px; box-sizing: border-box; }
.table { box-sizing: border-box; width: 1012px; height: 797px; border: 1px solid #484848; display: flex; overflow: hidden; }
.grid { width: 990px; }
.row {
  display: grid;
  grid-template-columns: 67px 465px 115px 96px 115px 75px 57px;
  height: 22px;
  line-height: 24px;
  border-bottom: 1px solid #000;
  color: rgba(215, 215, 215, .78);
}
.row span { border-right: 1px solid #000; text-align: center; white-space: pre; overflow: hidden; }
.row .name { text-align: left; padding-left: 3px; }
.head { height: 28px; border: 0; background: #454545; color: #dcdcdc; font-family: "Ubuntu", "Noto Sans", sans-serif; font-size: 12.8px; line-height: 29px; }
.head span { border-right: 1px solid #353535; border-left: 1px solid #646464; }
.head span:last-child { border-right: 0; }
.row.head .name { padding-left: 8px; }
.head .first { padding-left: 7px; }
.sort { vertical-align: 4px; margin-left: 1px; }
.scroll { flex: 1; display: flex; justify-content: center; }
.thumb { width: 14px; height: 20px; margin-top: 7px; border-radius: 7px; background: #5a5a5a; }
.composer { display: flex; height: 30px; margin-top: 5px; align-items: center; }
label { width: 77px; padding-left: 8px; height: 30px; line-height: 31px; color: #929292; }
.input { box-sizing: border-box; width: 664px; height: 26px; border: 1px solid #646464; border-radius: 3px; background: #1e1e1e; padding-left: 4px; line-height: 24px; font-weight: bold; }
.input b { color: #82c4fa; }
.input em { color: #d00000; font-style: normal; }
.rule { width: 2px; height: 28px; margin: 0 9px; background: #969696; }
.combo { box-sizing: border-box; width: 211px; height: 28px; border: 1px solid #646464; border-radius: 3px; background: #1e1e1e; display: flex; color: #b4b4b4; }
.value { flex: 1; padding-left: 18px; line-height: 27px; white-space: pre; }
.drop { width: 15px; border-left: 1px solid #646464; background: #323232; display: flex; align-items: center; justify-content: center; padding-top: 2px; }
.brush { margin-left: 10px; }
</style>
